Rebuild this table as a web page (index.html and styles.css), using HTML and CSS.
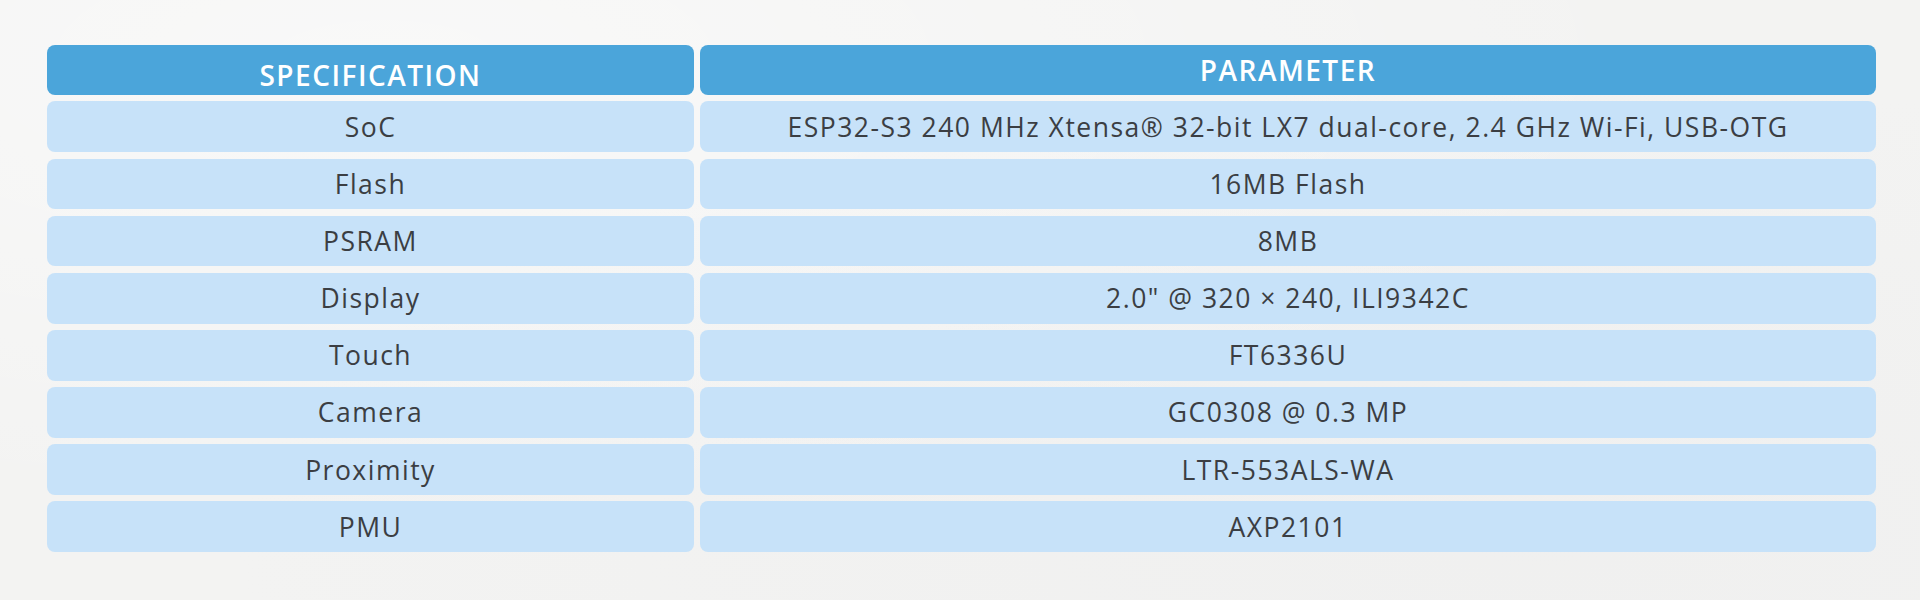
FILE: index.html
```html
<!DOCTYPE html>
<html lang="en">
<head>
<meta charset="utf-8">
<title>Specifications</title>
<link rel="stylesheet" href="styles.css">
</head>
<body>
<main class="page">
  <div class="spec-table">
    <div class="cell head head-spec">SPECIFICATION</div>
    <div class="cell head">PARAMETER</div>

    <div class="cell">SoC</div>
    <div class="cell">ESP32-S3 240 MHz Xtensa® 32-bit LX7 dual-core, 2.4 GHz Wi-Fi, USB-OTG</div>

    <div class="cell">Flash</div>
    <div class="cell">16MB Flash</div>

    <div class="cell">PSRAM</div>
    <div class="cell">8MB</div>

    <div class="cell">Display</div>
    <div class="cell">2.0" @ 320 × 240, ILI9342C</div>

    <div class="cell">Touch</div>
    <div class="cell">FT6336U</div>

    <div class="cell">Camera</div>
    <div class="cell">GC0308 @ 0.3 MP</div>

    <div class="cell">Proximity</div>
    <div class="cell">LTR-553ALS-WA</div>

    <div class="cell">PMU</div>
    <div class="cell">AXP2101</div>
  </div>
</main>
</body>
</html>
```

FILE: styles.css
```css
html, body {
  margin: 0;
  padding: 0;
}

body {
  width: 1920px;
  height: 600px;
  background: #f3f3f2;
  background-image:
    radial-gradient(ellipse at 20% 10%, rgba(255,255,255,0.5), rgba(255,255,255,0) 60%),
    radial-gradient(ellipse at 80% 90%, rgba(235,235,235,0.4), rgba(235,235,235,0) 60%);
  font-family: "Open Sans", "Liberation Sans", sans-serif;
  overflow: hidden;
}

.page {
  padding: 45px 44px 0 47px;
}

.spec-table {
  display: grid;
  grid-template-columns: 647px 1fr;
  grid-template-rows: 50px repeat(8, 50.7px);
  column-gap: 6px;
  row-gap: 6.45px;
  width: 1829px;
}

.cell {
  display: flex;
  align-items: center;
  justify-content: center;
  background: #c7e2f9;
  border-radius: 8px;
  color: #3b3e43;
  font-size: 26.5px;
  font-weight: 400;
  letter-spacing: 1.5px;
  white-space: nowrap;
}

.head {
  background: #4ba5da;
  color: #ffffff;
  font-weight: 600;
  font-size: 28px;
  letter-spacing: 1.5px;
}

.head-spec {
  padding-top: 9px;
  box-sizing: border-box;
}
```
